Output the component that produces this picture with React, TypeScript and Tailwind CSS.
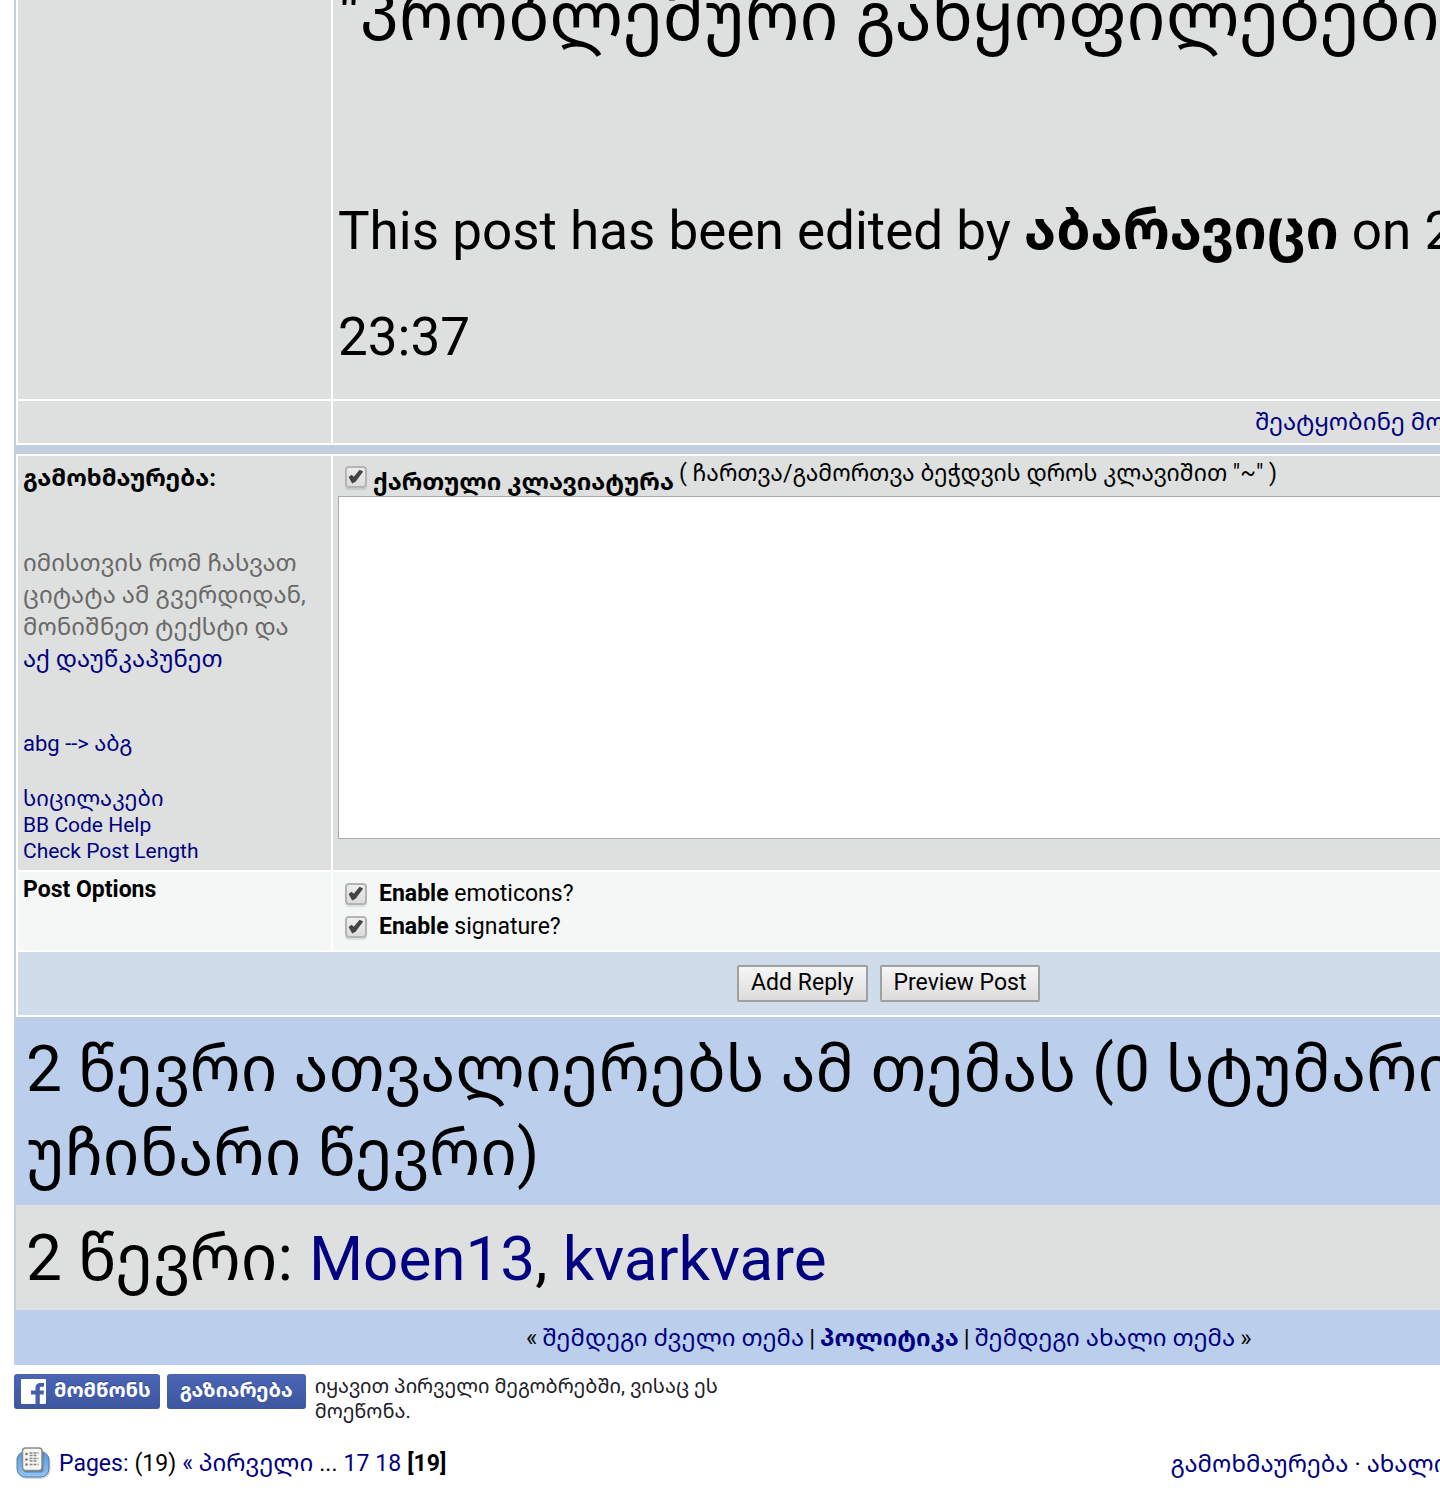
import { useState } from "react";
import type { ReactNode } from "react";

const link = "text-[#000080] hover:underline";

interface TickBoxProps {
  id: string;
  children: ReactNode;
  className?: string;
}

function TickBox({ id, children, className = "items-center" }: TickBoxProps) {
  const [checked, setChecked] = useState(true);

  return (
    <div className={`flex ${className}`}>
      <span className="relative ml-[7px] block size-[22px] shrink-0">
        <input
          id={id}
          type="checkbox"
          checked={checked}
          onChange={(e) => setChecked(e.target.checked)}
          className="block size-[22px] appearance-none rounded-[4px] border-2 border-[#b4b4b4] bg-linear-to-b from-[#ededed] to-[#dcdcdc] shadow-[0_2px_1px_rgba(0,0,0,0.1)]"
        />
        {checked && (
          <svg viewBox="0 0 22 22" className="pointer-events-none absolute inset-0 size-[22px]" aria-hidden="true">
            <path d="M3.600 11 L6.600 8.800 L8.800 10.800 L14.600 3.800 L18.200 5.600 L10.600 15.800 L7.200 17.600 Z" fill="#444" />
          </svg>
        )}
      </span>
      <label htmlFor={id} className="whitespace-nowrap">
        {children}
      </label>
    </div>
  );
}

function PagesIcon() {
  return (
    <svg viewBox="0 0 36 34" className="h-[34px] w-[36px] shrink-0" aria-hidden="true">
      <defs>
        <linearGradient id="tile" x1="0" y1="0" x2="0" y2="1">
          <stop offset="0" stopColor="#5f93d4" />
          <stop offset="1" stopColor="#8fc4f4" />
        </linearGradient>
      </defs>
      <rect x="1.500" y="6" width="33" height="26" rx="9" fill="#d6d9dd" />
      <rect x="0.500" y="4" width="33" height="26.500" rx="9" fill="#4f7cb9" />
      <rect x="1.500" y="4.500" width="31" height="25" rx="8" fill="url(#tile)" />
      <rect x="7.500" y="3" width="20" height="22.500" rx="3" fill="#3c5f8c" opacity="0.6" />
      <rect x="6.500" y="1" width="19.500" height="22.500" rx="3" fill="#f6f6f3" stroke="#8b8b88" strokeWidth="1.500" />
      <g stroke="#888" strokeWidth="1.300" strokeDasharray="3 1">
        <path d="M13.500 6h9M13.500 8.500h8M13.500 11.500h9M13.500 14h8M13.500 17.500h9" />
      </g>
      <g fill="#777">
        <circle cx="10.500" cy="7" r="1.300" />
        <circle cx="10.500" cy="12.500" r="1.300" />
        <circle cx="10.500" cy="17.500" r="1.300" />
      </g>
    </svg>
  );
}

function Post() {
  return (
    <table className="-mt-[2px] w-full table-fixed border-separate border-spacing-[2px] bg-white text-left">
      <colgroup>
        <col className="w-[313px]" />
        <col />
      </colgroup>
      <tbody className="align-top">
        <tr>
          <td className="bg-[#dee0df]" />
          <td className="whitespace-nowrap bg-[#dee0df] px-[5px] pb-[9px]">
            <p className="text-[68px] leading-[34px]">"პრობლემური განყოფილებები</p>
            <p className="mt-[143px] text-[53px] leading-[106px]">
              This post has been edited by <b className="text-[55px]">აბარავიცი</b> on 2
              <br />
              23:37
            </p>
          </td>
        </tr>
        <tr>
          <td className="bg-[#dee0df]" />
          <td className="h-[42px] bg-[#dee0df] pl-[922px] align-middle">
            <a href="#report" className={`whitespace-nowrap ${link}`}>
              შეატყობინე მოდერატორს
            </a>
          </td>
        </tr>
      </tbody>
    </table>
  );
}

function ReplyForm() {
  return (
    <form onSubmit={(e) => e.preventDefault()}>
      <table className="w-full table-fixed border-separate border-spacing-[2px] bg-white text-left">
        <colgroup>
          <col className="w-[313px]" />
          <col />
        </colgroup>
        <tbody className="align-top">
          <tr>
            <td className="h-[414px] bg-[#dee0df] px-[5px] pt-[6px]">
              <label htmlFor="reply" className="block font-bold leading-[32px]">
                გამოხმაურება:
              </label>
              <p className="mt-[53px] whitespace-nowrap leading-[32px] text-[#696969]">
                იმისთვის რომ ჩასვათ
                <br />
                ციტატა ამ გვერდიდან,
                <br />
                მონიშნეთ ტექსტი და
                <br />
                <a href="#quote" className={link}>აქ დაუწკაპუნეთ</a>
              </p>
              <div className="mt-[56px] flex flex-col items-start text-[21px] leading-[26px]">
                <a href="#convert" className={`text-[22px] ${link}`}>abg --&gt; აბგ</a>
                <a href="#smilies" className={`mt-[29px] text-[22px] ${link}`}>სიცილაკები</a>
                <a href="#bbcode" className={link}>BB Code Help</a>
                <a href="#length" className={link}>Check Post Length</a>
              </div>
            </td>
            <td className="bg-[#dee0df] px-[5px]">
              <div className="flex h-[40px] items-start whitespace-nowrap">
                <TickBox id="keyboard" className="items-start pt-[10px]">
                  <b className="ml-[6px]">ქართული კლავიატურა</b>
                </TickBox>
                <span className="ml-[5px] text-[23px] leading-[36px]">( ჩართვა/გამორთვა ბეჭდვის დროს კლავიშით "~" )</span>
              </div>
              <textarea
                id="reply"
                className="block h-[343px] w-full resize-none border border-[#a9a9a9] bg-white p-2 outline-none"
              />
            </td>
          </tr>
          <tr>
            <td className="h-[78px] bg-[#f5f7f6] px-[5px] text-[23px] font-bold leading-[36px]">Post Options</td>
            <td className="bg-[#f5f7f6] px-[5px] pt-[5px] text-[23px] leading-[33px]">
              <TickBox id="emoticons">
                <span className="ml-[12px]"><b>Enable</b> emoticons?</span>
              </TickBox>
              <TickBox id="signature">
                <span className="ml-[12px]"><b>Enable</b> signature?</span>
              </TickBox>
            </td>
          </tr>
          <tr>
            <td colSpan={2} className="h-[63px] bg-[#d0dcea] align-middle">
              <div className="flex justify-center gap-[12px] text-[23px] leading-[30px]">
                <button
                  type="submit"
                  className="h-[37px] rounded-[2px] border-2 border-[#a0a0a0] bg-linear-to-b from-[#f6f6f6] to-[#dcdcdc] px-[12px] pb-[2px]"
                >
                  Add Reply
                </button>
                <button
                  type="button"
                  className="h-[37px] rounded-[2px] border-2 border-[#a0a0a0] bg-linear-to-b from-[#f6f6f6] to-[#dcdcdc] px-[12px] pb-[2px]"
                >
                  Preview Post
                </button>
              </div>
            </td>
          </tr>
        </tbody>
      </table>
    </form>
  );
}

function Viewers() {
  return (
    <section className="text-[64px] leading-[84px]">
      <p className="whitespace-nowrap bg-[#bbceec] px-[10px] pb-[9px] pt-[11px]">
        2 წევრი ათვალიერებს ამ თემას (0 სტუმარი
        <br />
        უჩინარი წევრი)
      </p>
      <p className="bg-[#dee0df] px-[10px] pb-[9px] pt-[12px]">
        2 წევრი:{" "}
        <span className="text-[62px]">
          <a href="#moen13" className={link}>Moen13</a>, <a href="#kvarkvare" className={link}>kvarkvare</a>
        </span>
      </p>
      <nav className="flex h-[55px] items-center justify-center gap-[5px] bg-[#bbceec] text-[24px] leading-[32px]">
        <span>«</span>
        <a href="#older" className={link}>შემდეგი ძველი თემა</a>
        <span>|</span>
        <a href="#politics" className={`font-bold ${link}`}>პოლიტიკა</a>
        <span>|</span>
        <a href="#newer" className={link}>შემდეგი ახალი თემა</a>
        <span>»</span>
      </nav>
    </section>
  );
}

function SocialBar() {
  return (
    <div className="mt-[9px] flex items-start text-[20px] leading-[25px]">
      <button
        type="button"
        className="flex h-[35px] items-center rounded-[3px] bg-linear-to-b from-[#4a66b4] to-[#3d569f] pl-[7px] pr-[9px] font-bold text-white text-shadow-[0_-1px_0_#354c8c]"
      >
        <svg viewBox="0 0 25 25" className="mr-[8px] size-[25px]" aria-hidden="true">
          <rect width="25" height="25" rx="1" fill="#fff" />
          <path
            d="M14.500 25v-9.500h-4.500v-4h4.500V9c0-3.600 2-5 5.200-5H23V7.800h-2.200c-1.800 0-2 .6-2 1.800v1.900H23l-.4 4h-3.800V25z"
            fill="#4560aa"
          />
        </svg>
        <span className="pb-[3px]">მომწონს</span>
      </button>
      <button
        type="button"
        className="ml-[7px] h-[35px] rounded-[3px] bg-linear-to-b from-[#4a66b4] to-[#3d569f] px-[13px] pb-[3px] font-bold text-white text-shadow-[0_-1px_0_#354c8c]"
      >
        გაზიარება
      </button>
      <p className="ml-[9px] whitespace-nowrap text-[#1d2129]">
        იყავით პირველი მეგობრებში, ვისაც ეს
        <br />
        მოეწონა.
      </p>
    </div>
  );
}

function Footer() {
  return (
    <footer className="mt-[21px] flex items-center justify-between whitespace-nowrap pb-[20px] leading-[36px]">
      <nav className="flex items-center gap-[6px] pl-[2px] text-[23px]">
        <PagesIcon />
        <a href="#pages" className={`ml-px ${link}`}>Pages:</a>
        <span>(19)</span>
        <a href="#first" className={link}>« <span className="text-[24px]">პირველი</span></a>
        <span>...</span>
        <a href="#17" className={link}>17</a>
        <a href="#18" className={link}>18</a>
        <b>[19]</b>
      </nav>
      <nav className="w-[593px]">
        <a href="#post-reply" className={link}>გამოხმაურება</a> · <a href="#new-topic" className={link}>ახალი თემა</a>
      </nav>
    </footer>
  );
}

export default function App() {
  return (
    <div className="overflow-hidden bg-white font-['Roboto','Noto_Sans_Georgian','DejaVu_Sans',sans-serif] text-[24px] leading-[32px] text-black">
      <main className="ml-[14px] w-[121.5%]">
        <div className="border-x-2 border-[#c2cfdf]">
          <Post />
          <div className="h-[9px] bg-[#c2cfdf]" />
          <ReplyForm />
          <Viewers />
        </div>
        <SocialBar />
        <Footer />
      </main>
    </div>
  );
}
